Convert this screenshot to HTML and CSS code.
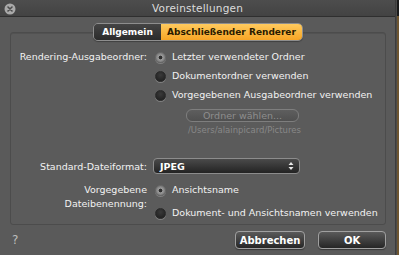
FILE: index.html
```html
<!DOCTYPE html>
<html>
<head>
<meta charset="utf-8">
<link rel="stylesheet" href="styles.css">
</head>
<body>
<div class="window">
  <div class="titlebar">
    <span class="close"><svg width="12" height="12" viewBox="0 0 12 12"><circle cx="6" cy="6" r="5.5" fill="#a9a9a9"/><path d="M4 4 L8 8 M8 4 L4 8" stroke="#4a4a4a" stroke-width="1.6" stroke-linecap="round"/></svg></span>
    <span class="title">Voreinstellungen</span>
  </div>
  <div class="content">
    <div class="tabs">
      <span class="tab tab-dark">Allgemein</span>
      <span class="tab tab-active">Abschließender Renderer</span>
    </div>
    <div class="group">
      <div class="row r1">
        <div class="label">Rendering-Ausgabeordner:</div>
        <div class="opts">
          <div class="opt"><span class="radio on"></span>Letzter verwendeter Ordner</div>
          <div class="opt"><span class="radio"></span>Dokumentordner verwenden</div>
          <div class="opt"><span class="radio"></span>Vorgegebenen Ausgabeordner verwenden</div>
          <div class="folder">
            <span class="btn-disabled">Ordner wählen...</span>
            <span class="path">/Users/alainpicard/Pictures</span>
          </div>
        </div>
      </div>
      <div class="row r2">
        <div class="label">Standard-Dateiformat:</div>
        <div class="popup"><span>JPEG</span><svg width="6" height="10" viewBox="0 0 6 10"><path d="M0.5 4 L3 1 L5.5 4 Z M0.5 6 L3 9 L5.5 6 Z" fill="#e8e8e8"/></svg></div>
      </div>
      <div class="row r3">
        <div class="label label-two">Vorgegebene<br>Dateibenennung:</div>
        <div class="opts opts2">
          <div class="opt"><span class="radio on"></span>Ansichtsname</div>
          <div class="opt"><span class="radio"></span>Dokument- und Ansichtsnamen verwenden</div>
        </div>
      </div>
    </div>
    <div class="footer">
      <span class="help">?</span>
      <span class="btn btn-cancel">Abbrechen</span>
      <span class="btn btn-ok">OK</span>
    </div>
  </div>
</div>
</body>
</html>
```

FILE: styles.css
```css
html, body { margin: 0; padding: 0; }
body {
  width: 399px; height: 255px; overflow: hidden;
  background: linear-gradient(#1a1a1a 0 16px, #6e5530 16px);
  font-family: "DejaVu Sans", sans-serif;
  font-size: 9.5px;
  color: #f2f2f2;
  white-space: nowrap;
}
.window {
  width: 395px; height: 255px;
  background: #5a5a5a;
  display: flex; flex-direction: column;
  box-shadow: 1px 0 0 #3c3c3c, 2px 0 0 #4a4a4a;
}
.titlebar {
  height: 16px;
  background: linear-gradient(#4d4d4d, #434343);
  border-bottom: 1px solid #2f2f2f;
  display: flex; align-items: center; justify-content: center;
  position: relative;
}
.close { position: absolute; left: 4px; top: 3px; width: 12px; height: 12px; }
.close svg { display: block; }
.title { color: #dcdcdc; font-size: 10.5px; letter-spacing: 0.2px; }
.content { flex: 1; display: flex; flex-direction: column; }
.tabs {
  align-self: flex-start;
  margin: 6px 0 -9px 93px;
  display: flex; height: 16px;
  border: 1px solid #8e8e8e; border-radius: 5px;
  overflow: hidden; position: relative; z-index: 1;
  box-shadow: 0 1px 1px rgba(0,0,0,0.3);
}
.tab {
  font-weight: bold; font-size: 9px;
  display: flex; align-items: center; justify-content: center;
}
.tab-dark { width: 67px; background: linear-gradient(#444, #2b2b2b); color: #fff; }
.tab-active { width: 141px; background: linear-gradient(#ffca5e, #f7a525); color: #2a1b00; }
.group {
  margin: 0 0 0 10px; width: 374px; height: 191px;
  border: 1px solid #4c4c4c; border-radius: 3px;
  background: #5b5b5b;
  box-shadow: inset 0 1px 0 #525252;
}
.row { display: flex; }
.label { width: 136px; text-align: right; flex: none; }
.r1 { margin-top: 17px; height: 82px; }
.r1 .label { line-height: 14px; }
.opts { margin-left: 8px; display: flex; flex-direction: column; }
.opt { display: flex; align-items: center; height: 14px; line-height: 14px; }
.r1 .opt:nth-child(2) { margin-top: 5px; }
.r1 .opt:nth-child(3) { margin-top: 5px; }
.radio {
  width: 11px; height: 11px; border-radius: 50%;
  margin-right: 6px; flex: none; box-sizing: border-box;
  background: radial-gradient(circle at 50% 35%, #3a3a3a, #1c1c1c);
  border: 1px solid #2a2a2a;
  box-shadow: 0 1px 0 rgba(255,255,255,0.22);
}
.radio.on {
  background: radial-gradient(circle, #2e2e2e 0 1.6px, #9a9a9a 2.2px, #777 5px);
  border-color: #6a6a6a;
}
.folder { display: flex; flex-direction: column; margin-left: 31px; margin-top: 7px; }
.btn-disabled {
  width: 111px; height: 11px; box-sizing: content-box;
  border: 1px solid #7e7e7e; border-radius: 6px;
  background: linear-gradient(#5e5e5e, #505050);
  color: #8e8e8e; font-size: 9.5px; line-height: 11px; text-align: center;
}
.path { color: #888; font-size: 8.5px; margin: 2px 0 0 2px; line-height: 12px; }
.r2 { margin-top: 26px; height: 16px; align-items: center; }
.popup {
  margin-left: 6px;
  border: 1px solid #8c8c8c; border-radius: 4px;
  background: linear-gradient(#4a4a4a, #232323);
  display: flex; align-items: center; justify-content: space-between;
  padding: 0 5px 0 6px; box-sizing: border-box; width: 147px; height: 16px;
  font-weight: bold; font-size: 9.5px; color: #fff;
}
.popup svg { display: block; }
.r3 { margin-top: 9px; }
.label-two { line-height: 14px; }
.opts2 .opt:nth-child(2) { margin-top: 9px; }
.footer { display: flex; align-items: center; height: 30px; }
.help { margin-left: 12px; color: #bdbdbd; font-size: 12px; }
.btn {
  height: 16px; border: 1px solid #a0a0a0; border-radius: 4px;
  background: linear-gradient(#5a5a5a, #262626);
  color: #fff; font-weight: bold; font-size: 10px;
  display: flex; align-items: center; justify-content: center;
  box-shadow: 0 1px 1px rgba(0,0,0,0.35);
}
.btn-cancel { margin-left: auto; width: 68px; }
.btn-ok { margin-left: 13px; margin-right: 9px; width: 66px; }
```
